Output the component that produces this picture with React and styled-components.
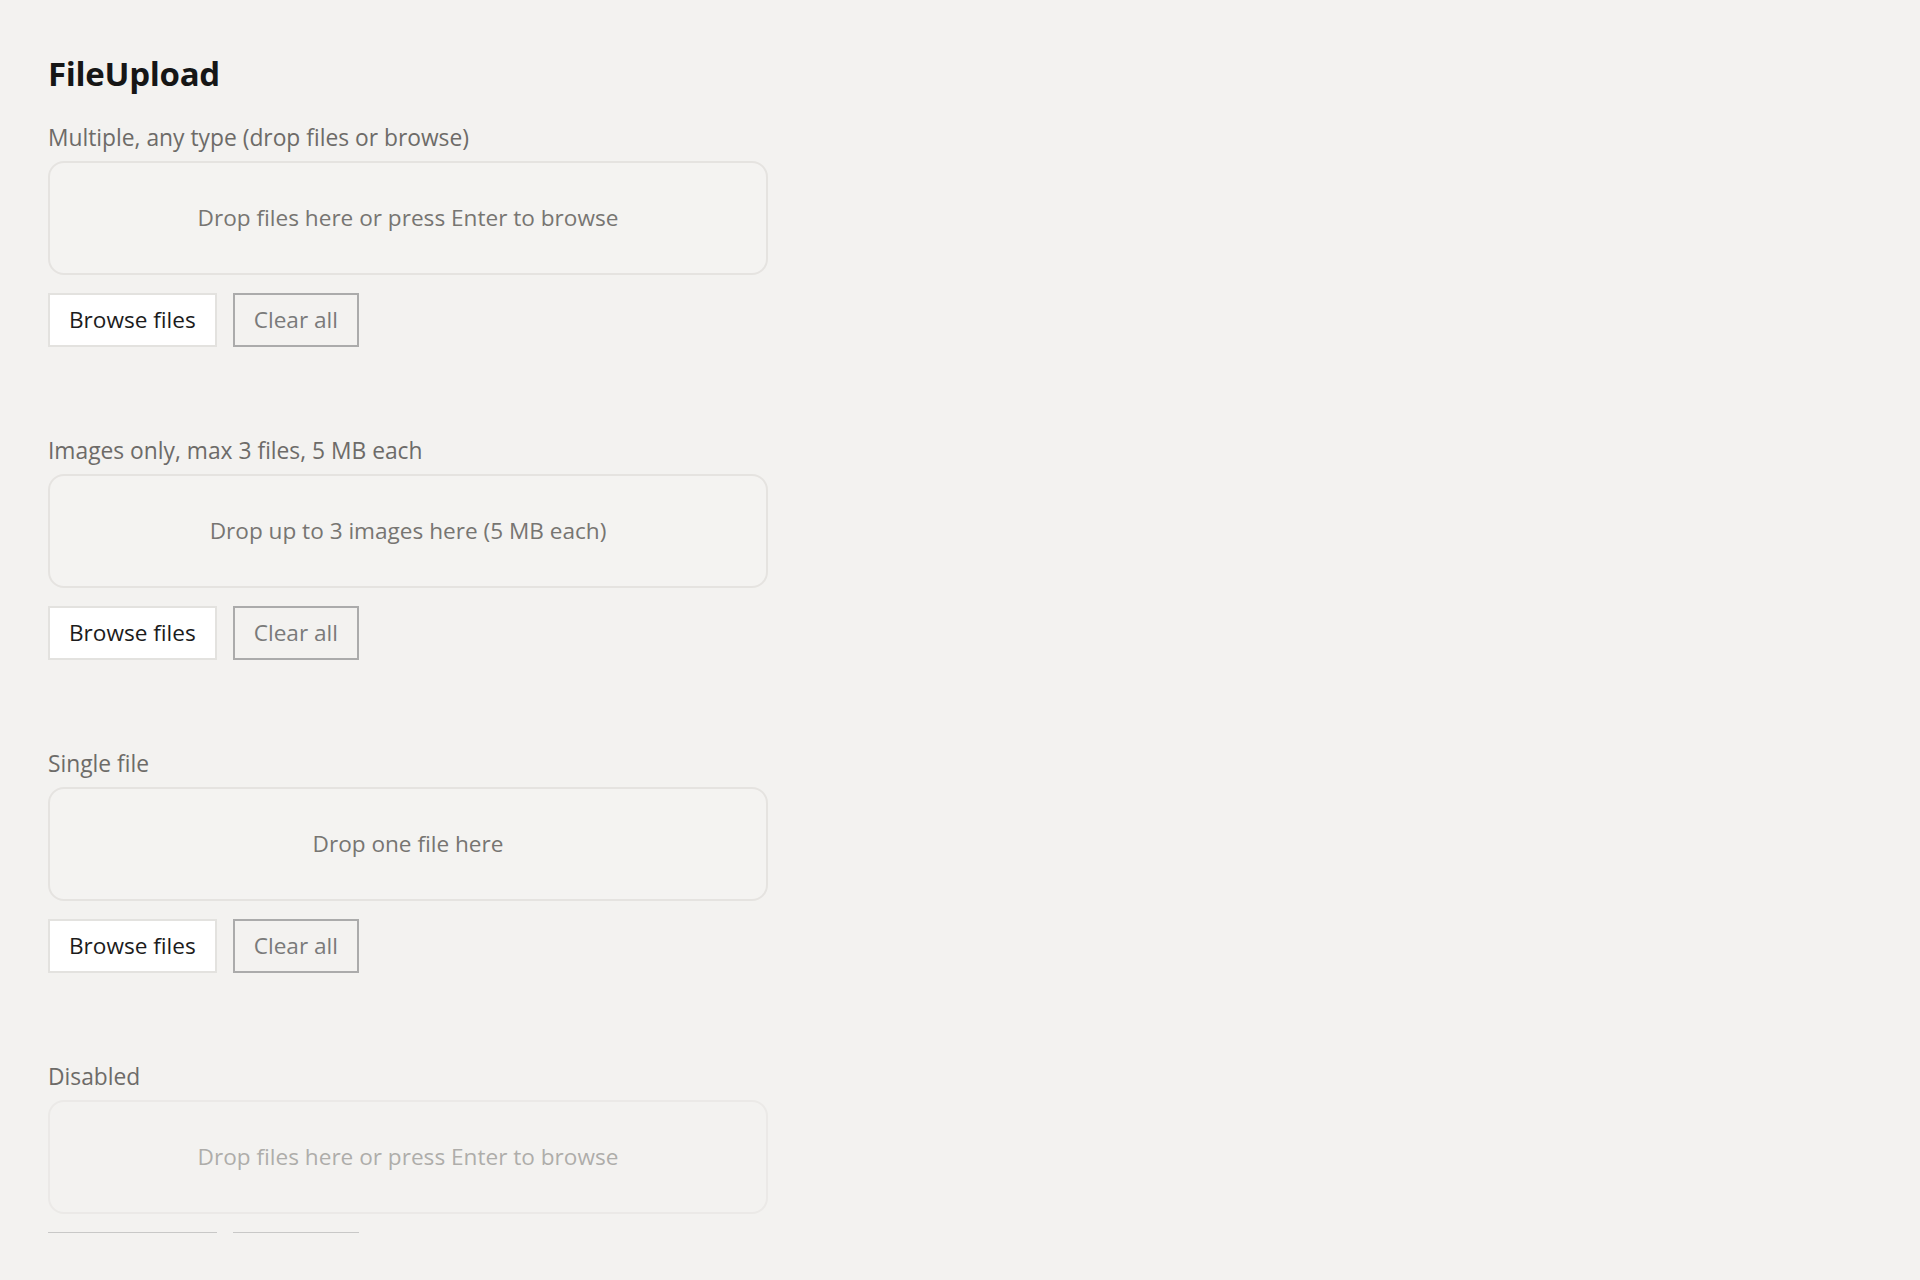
import React from "react";
import styled, { createGlobalStyle } from "styled-components";

const uploaders = [
  {
    label: "Multiple, any type (drop files or browse)",
    prompt: "Drop files here or press Enter to browse",
  },
  {
    label: "Images only, max 3 files, 5 MB each",
    prompt: "Drop up to 3 images here (5 MB each)",
  },
  {
    label: "Single file",
    prompt: "Drop one file here",
  },
  {
    label: "Disabled",
    prompt: "Drop files here or press Enter to browse",
    disabled: true,
  },
];

function FileUpload({ label, prompt, disabled }) {
  return (
    <Section>
      <Label>{label}</Label>
      <DropZone $disabled={disabled} tabIndex={disabled ? -1 : 0}>
        <Prompt>{prompt}</Prompt>
      </DropZone>
      <Actions>
        <Button
          type="button"
          $variant="primary"
          $off={disabled}
          disabled={disabled}
        >
          Browse files
        </Button>
        <Button type="button" $variant="ghost" $off={disabled} disabled>
          Clear all
        </Button>
      </Actions>
    </Section>
  );
}

export default function App() {
  return (
    <>
      <GlobalStyle />
      <Viewport>
        <Page>
          <Title>FileUpload</Title>
          <List>
            {uploaders.map((u) => (
              <FileUpload key={u.label} {...u} />
            ))}
          </List>
        </Page>
      </Viewport>
    </>
  );
}

const GlobalStyle = createGlobalStyle`
  * {
    box-sizing: border-box;
  }

  body {
    margin: 0;
    background: #f3f2f0;
    font-family: "Open Sans", "Noto Sans", sans-serif;
    color: #1a1a1a;
  }
`;

const Viewport = styled.div`
  height: 1233px;
  overflow: hidden;
`;

const Page = styled.main`
  padding: 54px 48px;
`;

const Title = styled.h1`
  margin: 0 0 27px;
  font-size: 33px;
  line-height: 40px;
  font-weight: 700;
  letter-spacing: -0.3px;
  color: #161616;
`;

const List = styled.div`
  display: flex;
  flex-direction: column;
  gap: 87px;
`;

const Section = styled.section`
  display: flex;
  flex-direction: column;
  align-items: flex-start;
`;

const Label = styled.div`
  margin-bottom: 7px;
  font-size: 22.8px;
  line-height: 33px;
  color: #6d6b68;
`;

const DropZone = styled.div`
  display: flex;
  align-items: center;
  justify-content: center;
  width: 720px;
  height: 114px;
  border: 2px solid #e5e3e0;
  border-radius: 16px;
  background: #f4f3f1;
  color: #777572;
  opacity: ${(p) => (p.$disabled ? 0.55 : 1)};
  outline: none;
`;

const Prompt = styled.span`
  font-size: 22.6px;
  line-height: 30px;
`;

const Actions = styled.div`
  display: flex;
  gap: 16px;
  margin-top: 18px;
`;

const Button = styled.button`
  height: 54px;
  padding: 0 19px;
  font-family: inherit;
  font-size: 22.6px;
  line-height: 30px;
  border-radius: 0;
  cursor: pointer;
  border: 2px solid
    ${(p) => (p.$variant === "primary" && !p.$off ? "#e3e2df" : "#ababab")};
  background: ${(p) =>
    p.$variant === "primary" && !p.$off ? "#ffffff" : "transparent"};
  color: ${(p) => (p.$variant === "primary" ? "#1c1c1c" : "#7a7a7a")};
  opacity: ${(p) => (p.$off ? 0.6 : 1)};

  &:disabled {
    cursor: default;
  }
`;
